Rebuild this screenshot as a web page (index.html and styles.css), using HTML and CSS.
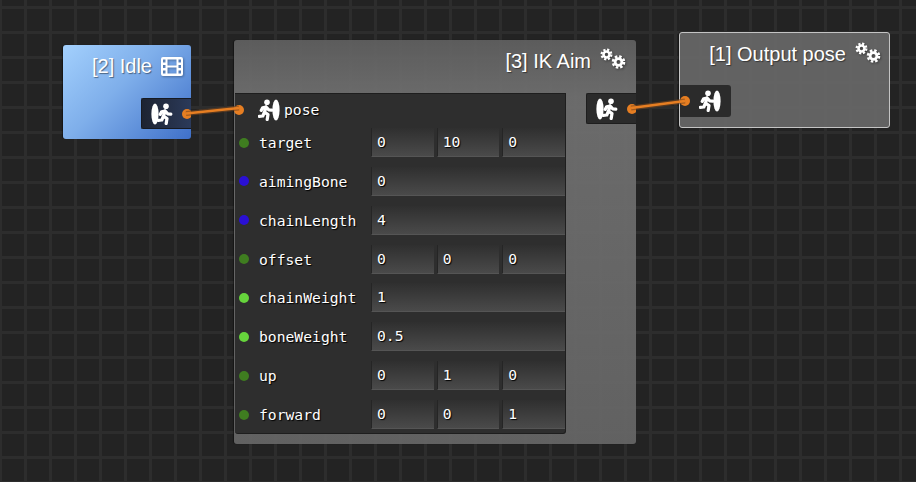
FILE: index.html
```html
<!DOCTYPE html>
<html lang="en">
<head>
<meta charset="UTF-8">
<title>Node graph</title>
<link rel="stylesheet" href="styles.css">
</head>
<body>

<svg class="defs" width="0" height="0">
    <symbol id="runner" viewBox="0 0 16 22">
        <circle cx="9" cy="3.200" r="2.800" fill="#fff"/>
        <path d="M8 8 L6.500 13 L10 15.600 L9.200 20.500 M6.500 13 L4.800 17 L1.200 17.400 M8 8 L4.600 8.800 L3.200 11.400 M8 8 L10.800 10.800 L13.800 11.200" fill="none" stroke="#fff" stroke-width="3.200" stroke-linecap="round" stroke-linejoin="round"/>
    </symbol>
    <symbol id="cogs" viewBox="0 0 27 23">
        <g fill="none" stroke="#fff">
            <circle cx="6.500" cy="6.500" r="3" stroke-width="2.600"/>
            <circle cx="6.500" cy="6.500" r="4.900" stroke-width="2.200" stroke-dasharray="2.200 1.650"/>
            <circle cx="18.500" cy="14" r="3.400" stroke-width="2.800"/>
            <circle cx="18.500" cy="14" r="5.600" stroke-width="2.400" stroke-dasharray="2.500 1.900"/>
        </g>
    </symbol>
</svg>

<div class="node idle">
    <div class="title">[2] Idle
        <svg class="film" viewBox="0 0 22 19">
            <path fill="#fff" fill-rule="evenodd" d="M2 0H20a2 2 0 0 1 2 2V17a2 2 0 0 1-2 2H2a2 2 0 0 1-2-2V2a2 2 0 0 1 2-2ZM2 2.500V5.500H4.500V2.500ZM17.500 2.500V5.500H20V2.500ZM2 8V11H4.500V8ZM17.500 8V11H20V8ZM2 13.500V16.500H4.500V13.500ZM17.500 13.500V16.500H20V13.500ZM6.500 2.500V8.500H15.500V2.500ZM6.500 10.500V16.500H15.500V10.500Z"/>
        </svg>
    </div>
    <div class="out-port">
        <svg class="run-icon" viewBox="0 0 22 24"><ellipse cx="4" cy="12" rx="3.600" ry="10.500" fill="#fff"/><use href="#runner" x="6" y="1" width="16" height="22"/></svg>
        <span class="dot orange"></span>
    </div>
</div>

<div class="node aim">
    <div class="title">[3] IK Aim <svg class="cogs"><use href="#cogs"/></svg></div>
    <div class="aim-body">
        <div class="panel">
            <div class="pose-row">
                <span class="dot orange"></span>
                <svg class="run-icon" viewBox="0 0 22 24"><use href="#runner" x="0" y="1" width="16" height="22"/><ellipse cx="18" cy="12" rx="3.600" ry="10.500" fill="#fff"/></svg>
                <span class="pose-label">pose</span>
            </div>
            <div class="row"><span class="dot green"></span><span class="label">target</span><span class="field">0</span><span class="field">10</span><span class="field">0</span></div>
            <div class="row"><span class="dot blue"></span><span class="label">aimingBone</span><span class="field">0</span></div>
            <div class="row"><span class="dot blue"></span><span class="label">chainLength</span><span class="field">4</span></div>
            <div class="row"><span class="dot green"></span><span class="label">offset</span><span class="field">0</span><span class="field">0</span><span class="field">0</span></div>
            <div class="row"><span class="dot lime"></span><span class="label">chainWeight</span><span class="field">1</span></div>
            <div class="row"><span class="dot lime"></span><span class="label">boneWeight</span><span class="field">0.5</span></div>
            <div class="row"><span class="dot green"></span><span class="label">up</span><span class="field">0</span><span class="field">1</span><span class="field">0</span></div>
            <div class="row"><span class="dot green"></span><span class="label">forward</span><span class="field">0</span><span class="field">0</span><span class="field">1</span></div>
        </div>
        <div class="out-port aim-out">
            <svg class="run-icon" viewBox="0 0 22 24"><ellipse cx="4" cy="12" rx="3.600" ry="10.500" fill="#fff"/><use href="#runner" x="6" y="1" width="16" height="22"/></svg>
            <span class="dot orange"></span>
        </div>
    </div>
</div>

<div class="node output">
    <div class="title">[1] Output pose <svg class="cogs"><use href="#cogs"/></svg></div>
    <div class="in-port">
        <span class="dot orange"></span>
        <svg class="run-icon" viewBox="0 0 22 24"><use href="#runner" x="0" y="1" width="16" height="22"/><ellipse cx="18" cy="12" rx="3.600" ry="10.500" fill="#fff"/></svg>
    </div>
</div>

<svg class="wires" width="916" height="482">
    <line class="glow" x1="186" y1="113.500" x2="239" y2="108"/>
    <line x1="186" y1="113.500" x2="239" y2="108"/>
    <line class="glow" x1="631" y1="108" x2="685" y2="101"/>
    <line x1="631" y1="108" x2="685" y2="101"/>
</svg>

</body>
</html>
```

FILE: styles.css
```css
html, body {
    height: 100%;
}

body {
    margin: 0;
    overflow: hidden;
    position: relative;
    background-color: #232323;
    background-image:
        linear-gradient(#2d2d2d 3px, transparent 3px),
        linear-gradient(90deg, #2d2d2d 3px, transparent 3px);
    background-size: 25px 25px;
    background-position: 0 6px, -1px 0;
    font-family: "Liberation Sans", Arial, sans-serif;
}

.defs {
    position: absolute;
}

.node {
    position: absolute;
    box-sizing: border-box;
    border-radius: 3px;
    color: #fff;
    box-shadow: -1px 0 1px rgba(0, 0, 0, 0.4);
}

.title {
    display: flex;
    justify-content: flex-end;
    align-items: center;
    gap: 9px;
    font-size: 20px;
    line-height: 24px;
    text-shadow: 1px 1px 1px rgba(0, 0, 0, 0.45);
}

.idle {
    left: 63px;
    top: 45px;
    width: 128px;
    height: 94px;
    background: linear-gradient(135deg, #a3d0fd 0%, #7eaeea 45%, #3f70c9 100%);
}

.idle .title {
    padding: 9px 8px 0 0;
}

.film {
    width: 22px;
    height: 19px;
    filter: drop-shadow(1px 1px 1px rgba(0, 0, 0, 0.3));
}

.cogs {
    width: 27px;
    height: 23px;
    transform: translateY(-1px);
    filter: drop-shadow(1px 1px 1px rgba(0, 0, 0, 0.4));
}

.out-port {
    display: flex;
    align-items: center;
    box-sizing: border-box;
    width: 50px;
    height: 31px;
    margin: 20px 0 0 auto;
    padding-left: 9px;
    gap: 9px;
    overflow: hidden;
    background: linear-gradient(90deg, #1d2331, #2b3a5a);
    border: 1px solid #161a22;
    border-right: 0;
    border-radius: 2px 0 0 2px;
}

.run-icon {
    width: 22px;
    height: 24px;
    flex: none;
}

.aim {
    left: 234px;
    top: 40px;
    width: 402px;
    height: 404px;
    background: linear-gradient(rgba(96, 96, 96, 0.93), rgba(112, 112, 112, 0.93) 14%, rgba(102, 102, 102, 0.93));
}

.aim .title {
    height: 53px;
    padding: 0 9px 12px 0;
    box-sizing: border-box;
}

.aim-body {
    display: flex;
    align-items: flex-start;
    justify-content: space-between;
}

.panel {
    box-sizing: border-box;
    width: 331px;
    height: 341px;
    margin-left: 1px;
    background: #2e2e2e;
    border-top: 1px solid #1e1e1e;
    border-right: 1px solid #1e1e1e;
    border-bottom: 1px solid #1e1e1e;
    border-radius: 0 0 3px 3px;
    font-family: "DejaVu Sans Mono", "Liberation Mono", monospace;
    font-size: 14.700px;
}

.pose-row {
    display: flex;
    align-items: center;
    height: 34px;
    padding: 0 0 3px 0;
    box-sizing: border-box;
}

.pose-row .dot {
    margin-left: -1px;
}

.pose-row .run-icon {
    margin-left: 14px;
}

.pose-label {
    margin-left: 4px;
    text-shadow: 1px 1px 1px #000;
}

.row {
    display: flex;
    align-items: center;
    height: 29px;
    margin-bottom: 9.860px;
    padding-left: 4px;
}

.label {
    width: 112px;
    margin-left: 10px;
    flex: none;
    text-shadow: 1px 1px 1px #000;
}

.field {
    flex: 1;
    box-sizing: border-box;
    height: 29px;
    margin-right: 3px;
    padding-left: 5px;
    line-height: 27px;
    background: linear-gradient(#2f2f2f, #4a4a4a);
    border-left: 1px solid #252525;
    border-bottom: 1px solid #555555;
    text-shadow: 1px 1px 1px #000;
}

.field:last-child {
    margin-right: 0;
}

.dot {
    display: block;
    flex: none;
    width: 10px;
    height: 10px;
    border-radius: 50%;
}

.orange {
    background: #e67e22;
}

.green {
    background: #3f7d20;
}

.blue {
    background: #2a10d4;
}

.lime {
    background: #66d43c;
}

.aim-out {
    height: 31px;
    margin-top: 0;
    background: #2b2b2b;
    border-color: #1e1e1e;
}

.output {
    left: 679px;
    top: 32px;
    width: 211px;
    height: 96px;
    background: rgba(102, 102, 102, 0.95);
    border: 1px solid #c4c4c4;
}

.output .title {
    padding: 9px 7px 0 0;
}

.in-port {
    display: flex;
    align-items: center;
    box-sizing: border-box;
    width: 51px;
    height: 32px;
    margin-top: 19px;
    background: #2b2b2b;
    border-radius: 0 3px 3px 0;
}

.in-port .run-icon {
    margin-left: 9px;
}

.wires {
    position: absolute;
    left: 0;
    top: 0;
    pointer-events: none;
}

.wires line {
    stroke: #e67e22;
    stroke-width: 2.500;
}

.wires .glow {
    stroke: rgba(120, 70, 30, 0.6);
    stroke-width: 5;
}
```
